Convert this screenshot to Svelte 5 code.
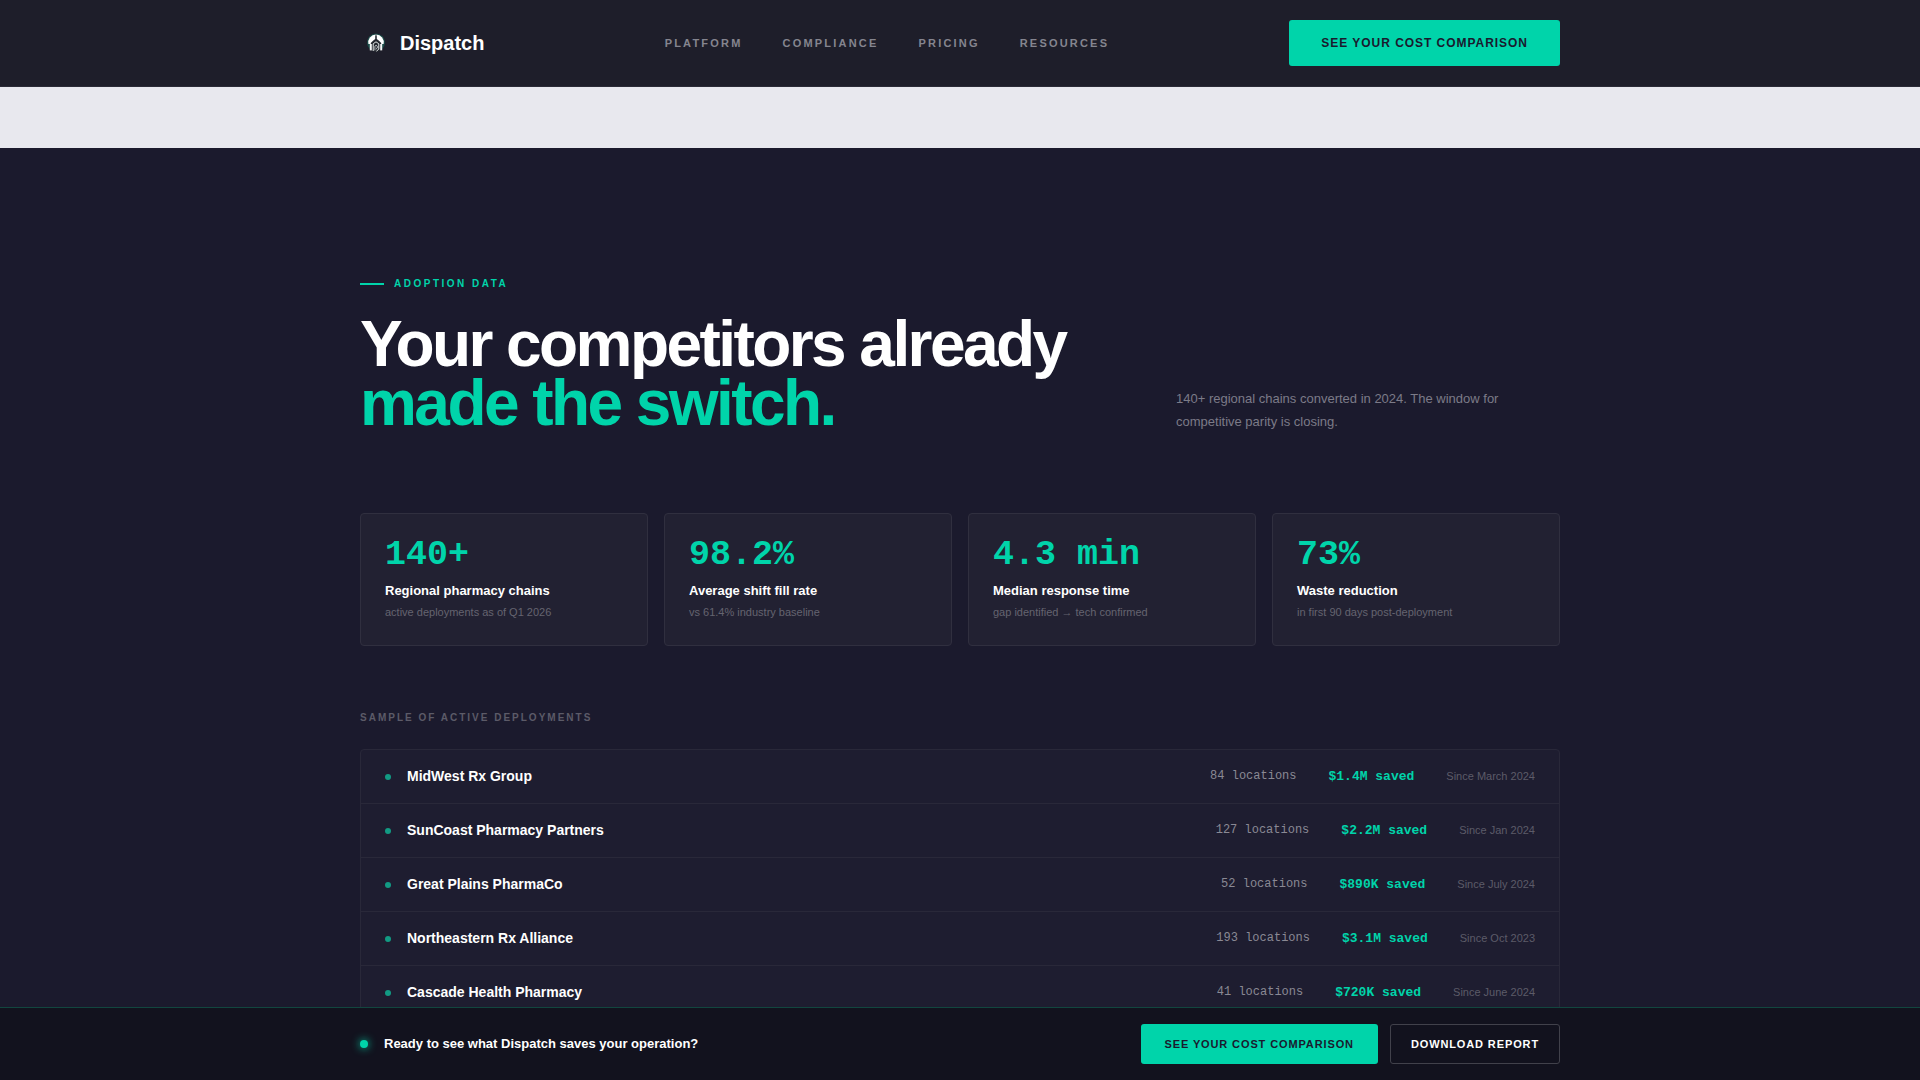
<script>
  const links = ['Platform', 'Compliance', 'Pricing', 'Resources'];

  const stats = [
    { value: '140+', label: 'Regional pharmacy chains', note: 'active deployments as of Q1 2026' },
    { value: '98.2%', label: 'Average shift fill rate', note: 'vs 61.4% industry baseline' },
    { value: '4.3 min', label: 'Median response time', note: 'gap identified → tech confirmed' },
    { value: '73%', label: 'Waste reduction', note: 'in first 90 days post-deployment' },
  ];

  const deployments = [
    { name: 'MidWest Rx Group', locations: 84, saved: '$1.4M', since: 'March 2024' },
    { name: 'SunCoast Pharmacy Partners', locations: 127, saved: '$2.2M', since: 'Jan 2024' },
    { name: 'Great Plains PharmaCo', locations: 52, saved: '$890K', since: 'July 2024' },
    { name: 'Northeastern Rx Alliance', locations: 193, saved: '$3.1M', since: 'Oct 2023' },
    { name: 'Cascade Health Pharmacy', locations: 41, saved: '$720K', since: 'June 2024' },
  ];
</script>

<header class="topbar">
  <div class="container topbar-inner">
    <a class="brand" href="#home">
      <svg class="logo" viewBox="0 0 32 32" aria-hidden="true">
        <circle cx="16" cy="15.5" r="9" fill="#1c4d49" />
        <path d="M8.4 17a7.8 7.8 0 1 1 15.2 0z" fill="#fff" />
        <path d="M16 6.5l.8 3v2.6l2.2 1.6 2.2 2.4v7l-3.4 1.9h-3.6l-3.4-1.9v-7l2.2-2.4 2.2-1.6v-2.6z" fill="#24272f" />
        <path d="M10.8 17v6.4" fill="none" stroke="#f4f6f6" stroke-width="2" />
        <path d="M21.2 17v6.4" fill="none" stroke="#f4f6f6" stroke-width="2" />
        <path d="M13.2 24v-7.2l2.8-2 2.8 2v5.4l-2.4 2" fill="none" stroke="#e4e8e8" stroke-width="1" />
        <path d="M14.9 23.4v-4.2l1.2-1 1.2 1v1.8l-1.4 1.2" fill="none" stroke="#c4c9cc" stroke-width="0.9" />
      </svg>
      <span>Dispatch</span>
    </a>
    <nav class="links" aria-label="Main">
      {#each links as link}
        <a href="#{link.toLowerCase()}">{link}</a>
      {/each}
    </nav>
    <button class="btn primary large" type="button">See your cost comparison</button>
  </div>
</header>

<main>
  <section class="adoption">
    <div class="container">
      <p class="eyebrow">Adoption data</p>
      <div class="intro">
        <h1>Your competitors already<br /><span class="accent">made the switch.</span></h1>
        <p class="lede">140+ regional chains converted in 2024. The window for competitive parity is closing.</p>
      </div>

      <div class="stats">
        {#each stats as stat}
          <article class="stat">
            <div class="value">{stat.value}</div>
            <div class="label">{stat.label}</div>
            <div class="note">{stat.note}</div>
          </article>
        {/each}
      </div>

      <h2>Sample of active deployments</h2>
      <ul class="deployments">
        {#each deployments as d}
          <li>
            <span class="dot"></span>
            <span class="name">{d.name}</span>
            <span class="meta">
              <span class="locations">{d.locations} locations</span>
              <span class="saved">{d.saved} saved</span>
              <span class="since">Since {d.since}</span>
            </span>
          </li>
        {/each}
      </ul>
    </div>
  </section>
</main>

<aside class="cta-bar" aria-label="Get started">
  <div class="container cta-inner">
    <span class="pulse"></span>
    <span class="cta-text">Ready to see what Dispatch saves your operation?</span>
    <div class="cta-actions">
      <button class="btn primary" type="button">See your cost comparison</button>
      <button class="btn outline" type="button">Download report</button>
    </div>
  </div>
</aside>

<style>
  :global(body) {
    background: #e8e8ee;
    color: #fff;
    font-family: 'Liberation Sans', Arial, sans-serif;
  }

  .container {
    box-sizing: border-box;
    max-width: 1248px;
    margin: 0 auto;
    padding: 0 24px;
  }

  .topbar {
    position: sticky;
    top: 0;
    z-index: 2;
    background: #1e1e2a;
    border-bottom: 1px solid #2b2b37;
  }

  .topbar-inner {
    display: flex;
    align-items: center;
    justify-content: space-between;
    padding-top: 20px;
    padding-bottom: 20px;
  }

  .brand {
    display: flex;
    align-items: center;
    gap: 8px;
    color: #fff;
    font-size: 20px;
    font-weight: 700;
    text-decoration: none;
  }

  .logo {
    width: 32px;
    height: 32px;
  }

  .links {
    display: flex;
    gap: 40px;
  }

  .links a {
    color: #85858f;
    font-size: 11px;
    font-weight: 700;
    letter-spacing: 0.2em;
    text-decoration: none;
    text-transform: uppercase;
  }

  .btn {
    box-sizing: border-box;
    height: 40px;
    padding: 0 24px;
    border: 0;
    border-radius: 3px;
    font-family: inherit;
    font-size: 11px;
    font-weight: 700;
    letter-spacing: 0.08em;
    text-transform: uppercase;
    white-space: nowrap;
    cursor: pointer;
  }

  .primary {
    background: #00d4aa;
    color: #1a1a2e;
  }

  .large {
    height: 46px;
    padding: 0 32px;
    font-size: 12px;
  }

  .outline {
    padding: 0 20px;
    border: 1px solid #41414b;
    background: transparent;
    color: #fff;
  }

  .adoption {
    margin-top: 61px;
    padding: 128px 0;
    background: #1b1a2d;
  }

  .eyebrow {
    display: flex;
    align-items: center;
    gap: 10px;
    margin: 0 0 24px;
    color: #00d4aa;
    font-size: 10px;
    font-weight: 700;
    line-height: 15px;
    letter-spacing: 0.25em;
    text-transform: uppercase;
  }

  .eyebrow::before {
    content: '';
    width: 24px;
    height: 2px;
    background: #00d4aa;
  }

  .intro {
    display: grid;
    grid-template-columns: 2fr 1fr;
    gap: 48px;
    align-items: end;
    margin-bottom: 80px;
  }

  h1 {
    margin: 0;
    font-size: 64px;
    font-weight: 700;
    line-height: 59px;
    letter-spacing: -0.04em;
  }

  .accent {
    color: #00d4aa;
  }

  .lede {
    max-width: 340px;
    margin: 0;
    color: #7c7b88;
    font-size: 13px;
    line-height: 23px;
  }

  .stats {
    display: grid;
    grid-template-columns: repeat(4, 1fr);
    gap: 16px;
    margin-bottom: 64px;
  }

  .stat {
    padding: 24px;
    border: 1px solid #302f3f;
    border-radius: 4px;
    background: #222132;
  }

  .value {
    margin-bottom: 8px;
    color: #00d4aa;
    font-family: 'Liberation Mono', monospace;
    font-size: 35px;
    font-weight: 700;
    line-height: 34px;
  }

  .label {
    margin-bottom: 2px;
    font-size: 13px;
    font-weight: 700;
    line-height: 21px;
  }

  .note {
    color: #656470;
    font-size: 11px;
    line-height: 18px;
  }

  h2 {
    margin: 0 0 24px;
    color: #5c5b68;
    font-size: 10px;
    font-weight: 700;
    line-height: 15px;
    letter-spacing: 0.2em;
    text-transform: uppercase;
  }

  .deployments {
    margin: 0;
    padding: 0;
    border: 1px solid #292839;
    border-radius: 4px;
    background: #1e1d30;
    list-style: none;
  }

  .deployments li {
    display: flex;
    align-items: center;
    gap: 16px;
    padding: 16px 24px;
    line-height: 21px;
  }

  .deployments li + li {
    border-top: 1px solid #292839;
  }

  .dot {
    width: 6px;
    height: 6px;
    border-radius: 50%;
    background: #129a83;
  }

  .name {
    flex: 1;
    font-size: 14px;
    font-weight: 700;
  }

  .meta {
    display: flex;
    align-items: center;
    gap: 32px;
  }

  .locations,
  .saved {
    font-family: 'Liberation Mono', monospace;
  }

  .locations {
    color: #8a8994;
    font-size: 12px;
  }

  .saved {
    color: #00d4aa;
    font-size: 13px;
    font-weight: 700;
  }

  .since {
    color: #5c5b68;
    font-size: 11px;
  }

  .cta-bar {
    position: fixed;
    right: 0;
    bottom: 0;
    left: 0;
    z-index: 2;
    border-top: 1px solid #12463f;
    background: #12121e;
  }

  .cta-inner {
    display: flex;
    align-items: center;
    gap: 16px;
    padding-top: 16px;
    padding-bottom: 16px;
  }

  .pulse {
    width: 8px;
    height: 8px;
    border-radius: 50%;
    background: #00d4aa;
    box-shadow: 0 0 8px #00d4aa;
  }

  .cta-text {
    flex: 1;
    font-size: 13px;
    font-weight: 700;
    line-height: 20px;
  }

  .cta-actions {
    display: flex;
    gap: 12px;
  }
</style>
